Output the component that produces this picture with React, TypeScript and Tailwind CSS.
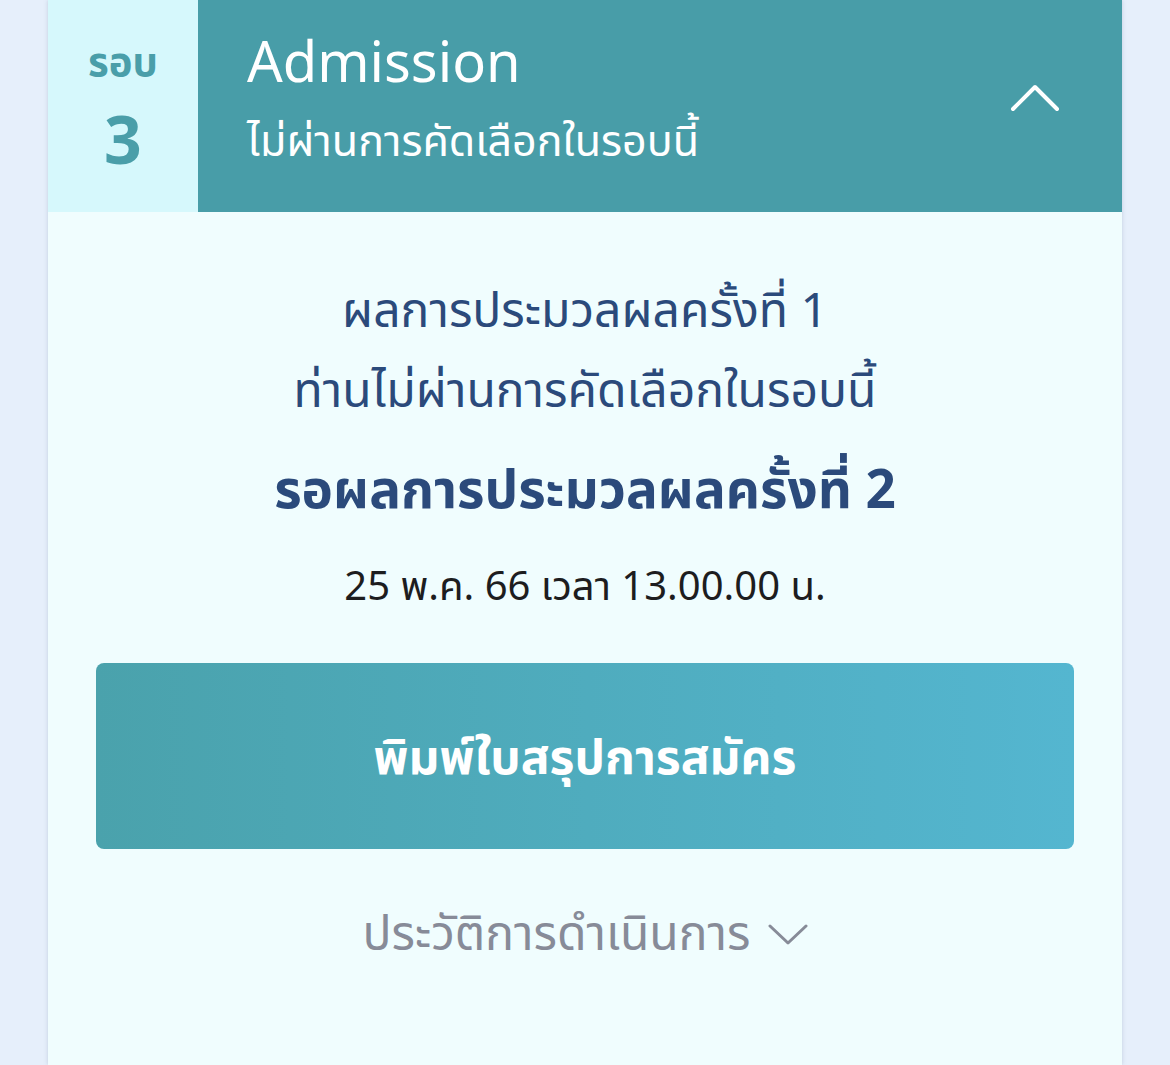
const thai = "font-['Noto_Sans','Noto_Sans_Thai','Noto_Sans_CJK_SC',sans-serif]";

export default function App() {
  return (
    <div className={`min-h-[1065px] bg-[#e6effb] px-[48px] ${thai}`}>
      <div className="min-h-[1065px] bg-[#f0fdfe] shadow-[0_0_4px_rgba(120,140,170,0.35)]">
        <div className="flex h-[212px]">
          <div className="flex w-[150px] flex-col items-center bg-[#d6f8fc] pt-[36px] text-[#4a9ea9]">
            <span className="text-[40px] font-bold leading-[50px]">รอบ</span>
            <span className="mt-[22px] text-[66px] font-bold leading-[60px]">3</span>
          </div>
          <div className="flex flex-1 items-start justify-between bg-[#489da8] pl-[49px] pr-[62px] text-white">
            <div className="flex flex-col gap-[15px] pt-[25px]">
              <span className="text-[56px] leading-[70px]">Admission</span>
              <span className="text-[43px] leading-[60px]">ไม่ผ่านการคัดเลือกในรอบนี้</span>
            </div>
            <svg className="mt-[83px]" width="50" height="30" viewBox="0 0 50 30" fill="none">
              <polyline points="3,26 25,4 47,26" stroke="white" strokeWidth="4" strokeLinecap="round" strokeLinejoin="round" />
            </svg>
          </div>
        </div>

        <div className="flex flex-col items-center pt-[57px] text-center">
          <p className="text-[48px] leading-[80px] text-[#2b4a7b]">ผลการประมวลผลครั้งที่ 1</p>
          <p className="text-[48px] leading-[80px] text-[#2b4a7b]">ท่านไม่ผ่านการคัดเลือกในรอบนี้</p>
          <p className="mt-[14px] text-[53px] font-bold leading-[90px] text-[#2b4a7b]">รอผลการประมวลผลครั้งที่ 2</p>
          <p className="mt-[22px] text-[40px] leading-[60px] text-[#1d1d1f]">25 พ.ค. 66 เวลา 13.00.00 น.</p>
        </div>

        <div className="px-[48px] pt-[48px]">
          <button className="flex h-[186px] w-full items-center justify-center rounded-[8px] bg-gradient-to-r from-[#4aa2ac] to-[#54b6d0] text-[48px] font-bold text-white">
            พิมพ์ใบสรุปการสมัคร
          </button>
        </div>

        <div className="flex items-center justify-center gap-[17px] pt-[48px] text-[#878b98]">
          <span className="text-[48px] leading-[70px]">ประวัติการดำเนินการ</span>
          <svg className="mt-[4px]" width="40" height="22" viewBox="0 0 40 22" fill="none">
            <polyline points="2,3 20,20 38,3" stroke="#878b98" strokeWidth="3" strokeLinecap="round" strokeLinejoin="round" />
          </svg>
        </div>
      </div>
    </div>
  );
}
